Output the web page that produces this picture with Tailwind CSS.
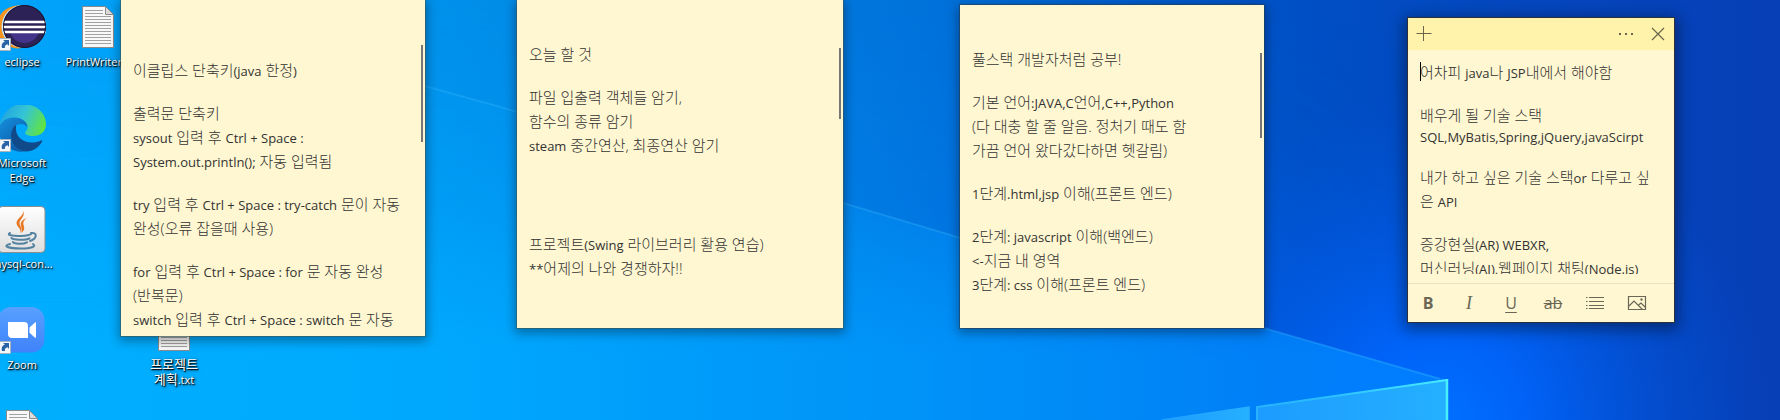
<!DOCTYPE html>
<html lang="ko">
<head>
<meta charset="utf-8">
<title>Desktop</title>
<script src="https://cdn.jsdelivr.net/npm/@tailwindcss/browser@4"></script>
</head>
<body class="relative h-screen overflow-hidden bg-[#0090f0] font-['Open_Sans','Noto_Sans_CJK_KR',sans-serif] text-[#333333]">

<!-- Wallpaper -->
<svg class="absolute inset-0 h-full w-full" viewBox="0 0 1780 420" preserveAspectRatio="none" aria-hidden="true">
  <defs>
    <linearGradient id="sky" x1="0" y1="0" x2="1" y2="0">
      <stop offset="0" stop-color="#00a4fa"/>
      <stop offset=".13" stop-color="#009df5"/>
      <stop offset=".27" stop-color="#008ee9"/>
      <stop offset=".4" stop-color="#007fe0"/>
      <stop offset=".52" stop-color="#0072da"/>
      <stop offset=".6" stop-color="#0064d4"/>
      <stop offset=".73" stop-color="#004fc4"/>
      <stop offset=".86" stop-color="#0546be"/>
      <stop offset="1" stop-color="#063fb6"/>
    </linearGradient>
    <linearGradient id="low" x1="0" y1="0" x2="1" y2="0">
      <stop offset="0" stop-color="#00b0ff"/>
      <stop offset=".3" stop-color="#00acff"/>
      <stop offset=".55" stop-color="#009dfc"/>
      <stop offset=".8" stop-color="#0093ff"/>
      <stop offset="1" stop-color="#0083ff"/>
    </linearGradient>
    <linearGradient id="veil" x1="0" y1="0" x2="1" y2="0">
      <stop offset="0" stop-color="#00b0ff"/>
      <stop offset=".35" stop-color="#00a4ff"/>
      <stop offset=".6" stop-color="#0090ff" stop-opacity=".8"/>
      <stop offset=".8" stop-color="#0078ff" stop-opacity=".4"/>
      <stop offset="1" stop-color="#0060ff" stop-opacity="0"/>
    </linearGradient>
    <linearGradient id="fadeDown" x1="0" y1="0" x2="0" y2="1">
      <stop offset="0" stop-color="#fff" stop-opacity="0"/>
      <stop offset=".5" stop-color="#fff" stop-opacity=".4"/>
      <stop offset=".85" stop-color="#fff"/>
    </linearGradient>
    <mask id="down"><rect width="1780" height="420" fill="url(#fadeDown)"/></mask>
    <radialGradient id="glow" gradientUnits="userSpaceOnUse" cx="1440" cy="420" r="330">
      <stop offset="0" stop-color="#0070ff"/>
      <stop offset=".25" stop-color="#0066ff" stop-opacity=".9"/>
      <stop offset=".6" stop-color="#005ff0" stop-opacity=".45"/>
      <stop offset="1" stop-color="#0055e0" stop-opacity="0"/>
    </radialGradient>
    <linearGradient id="pane" x1="0" y1="0" x2="1" y2="0">
      <stop offset="0" stop-color="#1c9cff"/>
      <stop offset="1" stop-color="#25b0ff"/>
    </linearGradient>
    <linearGradient id="edge" gradientUnits="userSpaceOnUse" x1="1160" y1="0" x2="1447" y2="0">
      <stop offset="0" stop-color="#20a0ff"/>
      <stop offset=".6" stop-color="#2cc0ff"/>
      <stop offset="1" stop-color="#48ecff"/>
    </linearGradient>
  </defs>
  <rect width="1780" height="420" fill="url(#sky)"/>
  <rect width="1440" height="420" fill="url(#veil)" opacity=".65" mask="url(#down)"/>
  <rect x="900" width="880" height="420" fill="url(#glow)"/>
  <path d="M0-34 L425 86 L843 203 L1264 328 L1447 380 V420 H0Z" fill="url(#low)" opacity=".75" mask="url(#down)"/>
  <path d="M300 50 L425 86 L843 203 L1264 328 L1440 379" fill="none" stroke="#3db8ff" stroke-opacity=".3" stroke-width="2"/>
  <path d="M1162 420 L1249 407 V420Z" fill="url(#pane)"/>
  <path d="M1162 420 L1249 407 V420" fill="none" stroke="url(#edge)" stroke-width="1.5"/>
  <path d="M1257 407 L1447 380 V420 H1257Z" fill="url(#pane)"/>
  <path d="M1257 420 V407 L1447 380" fill="none" stroke="url(#edge)" stroke-width="2"/>
  <path d="M1447 379 V420" stroke="#48f0ff" stroke-width="2.5"/>
</svg>

<!-- Desktop icons -->
<main class="relative -ml-4 grid h-screen w-[228px] grid-cols-3 auto-rows-[101px] overflow-hidden pt-1 text-center text-[11px] leading-[15px] text-white [text-shadow:1px_1px_1px_#000,1px_1px_3px_#000]">
  <a href="#eclipse" class="col-start-1 row-start-1 flex flex-col items-center gap-0.5">
    <svg class="size-12" viewBox="0 0 48 48" aria-hidden="true">
      <circle cx="20" cy="23" r="21.500" fill="#f7941e"/>
      <circle cx="25" cy="22.500" r="21.500" fill="#bfe3f7"/>
      <circle cx="26.500" cy="22.500" r="21.500" fill="#2c2255"/>
      <path d="M12 28h29a15 15 0 0 1-29 0z" fill="#43348a"/>
      <path d="M5.500 18h42M4.500 23h43.500M5.500 28h42" stroke="#fff" stroke-width="2.400"/>
      <circle cx="26.500" cy="22.500" r="21" fill="none" stroke="#17122e"/>
      <g><path d="M.5 34.500h12v12H.5z" fill="#f4f7fa" stroke="#a9b4bf"/><path d="M4 44c-1-4 1-6 3-6.500L5 36h6v6l-1.500-1.800C7 41 6.500 42 7 44z" fill="#2a62a8"/></g>
    </svg>
    <span>eclipse</span>
  </a>
  <a href="#printwriter" class="col-start-2 row-start-1 flex flex-col items-center gap-0.5">
    <svg class="size-12" viewBox="0 0 48 48" aria-hidden="true">
      <path d="M8.500 2.500h23l8 8v33h-31z" fill="#f8f8f8" stroke="#8b8b8b"/>
      <path d="M31.500 2.500v8h8z" fill="#dcdcdc" stroke="#8b8b8b"/>
      <path d="M11 6.500h18M11 9.500h18M11 12.500h26M11 15.500h26M11 18.500h26M11 21.500h26M11 24.500h26M11 27.500h26M11 30.500h26M11 33.500h26M11 36.500h26M11 39.500h26" stroke="#a2a2a2"/>
    </svg>
    <span>PrintWriter...</span>
  </a>
  <a href="#edge" class="col-start-1 row-start-2 flex flex-col items-center gap-0.5">
    <svg class="size-12" viewBox="0 0 48 48" aria-hidden="true">
      <defs>
        <linearGradient id="eg" x1="0" y1=".3" x2="1" y2=".6"><stop offset="0" stop-color="#1fa2e0"/><stop offset=".5" stop-color="#35c5d5"/><stop offset="1" stop-color="#62e43e"/></linearGradient>
        <linearGradient id="eb" x1="0" y1="0" x2=".7" y2="1"><stop offset="0" stop-color="#1590dc"/><stop offset="1" stop-color="#0c59a8"/></linearGradient>
      </defs>
      <path d="M1 22C3 9 13-1 25-1c13 0 23 9 23 20 0 8-6 12-13 12-5 0-8-1.500-8-3 0-1.500 2.500-2.500 2.500-6 0-5-6-9.500-13-9.500C9 12.500 4 16 1 22z" fill="url(#eg)"/>
      <path d="M1 22c3-6 8-9.500 15.500-9.500 7 0 13 4.500 13 9.500-2-2-4-3-6.500-3-6 0-10 6-10 12 0 8 6 15 13 15.500C12 48-1 36 1 22z" fill="url(#eb)"/>
      <path d="M18 20c-3 2-5 6-5 11 0 9 7 15.500 15 15.500 7 0 13-4 16-10 .5-1-.3-1.500-1-1-3 1.500-6 2-9 2-9 0-16-6-16-13 0-2 0-3 0-4.500z" fill="#114a8b"/>
      <g><path d="M.5 34.500h12v12H.5z" fill="#f4f7fa" stroke="#a9b4bf"/><path d="M4 44c-1-4 1-6 3-6.500L5 36h6v6l-1.500-1.800C7 41 6.500 42 7 44z" fill="#2a62a8"/></g>
    </svg>
    <span>Microsoft<br>Edge</span>
  </a>
  <a href="#mysql" class="col-start-1 row-start-3 flex flex-col items-center gap-0.5">
    <svg class="size-12" viewBox="0 0 48 48" aria-hidden="true">
      <defs><linearGradient id="jb" x1="0" y1="0" x2="0" y2="1"><stop offset="0" stop-color="#fff"/><stop offset="1" stop-color="#dedede"/></linearGradient></defs>
      <rect x=".5" y=".5" width="46.500" height="46" rx="4" fill="url(#jb)" stroke="#8d8d8d"/>
      <path d="M24.500 4c3 5-6 8-6 13 0 4 5 5 4 10 3-4-1-7-1-10 0-4 7-7 3-13zM29 12c-5 2-7 4-6 8 .8 3 2 4 0 7 4-3 3.500-5 2.500-8-.8-3 .5-5 3.500-7z" fill="#e87722"/>
      <path d="M12 27c-4 2 2 3.200 11 3 5-.2 9-1 10-2M13.500 32c1 2 14 2.500 18 .3M15 36c1 2 10 2.500 14 .3M33 27c6-1 7 5-1 8M12 38c-8 2-2 4.500 11 4.500 10 0 16-2 12-4.500" fill="none" stroke="#5382a1" stroke-width="2" stroke-linecap="round"/>
    </svg>
    <span>mysql-con...</span>
  </a>
  <a href="#zoom" class="col-start-1 row-start-4 flex flex-col items-center gap-0.5">
    <svg class="size-12" viewBox="0 0 48 48" aria-hidden="true">
      <defs><linearGradient id="zb" x1="0" y1="0" x2="0" y2="1"><stop offset="0" stop-color="#58a0ff"/><stop offset="1" stop-color="#3f82fb"/></linearGradient></defs>
      <rect x="0" y="0" width="46.500" height="45.500" rx="13" fill="url(#zb)"/>
      <path d="M10 15h16a4 4 0 0 1 4 4v12H14a4 4 0 0 1-4-4z" fill="#fff"/>
      <path d="M31.500 20.500l5.500-5c.6-.4 1 0 1 .6v14c0 .7-.4 1-1 .6l-5.500-5z" fill="#fff"/>
      <g><path d="M.5 34.500h12v12H.5z" fill="#f4f7fa" stroke="#a9b4bf"/><path d="M4 44c-1-4 1-6 3-6.500L5 36h6v6l-1.500-1.800C7 41 6.500 42 7 44z" fill="#2a62a8"/></g>
    </svg>
    <span>Zoom</span>
  </a>
  <a href="#project" class="col-start-3 row-start-4 flex flex-col items-center gap-0.5">
    <svg class="size-12" viewBox="0 0 48 48" aria-hidden="true">
      <path d="M8.500 2.500h23l8 8v33h-31z" fill="#f8f8f8" stroke="#8b8b8b"/>
      <path d="M11 24.500h26M11 27.500h26M11 30.500h26M11 33.500h26M11 36.500h26M11 39.500h26" stroke="#a2a2a2"/>
    </svg>
    <span class="text-[13px]">프로젝트<br>계획<span class="text-[11px] leading-none">.txt</span></span>
  </a>
  <a href="#document" aria-label="문서" class="col-start-1 row-start-5 flex flex-col items-center">
    <svg class="size-12" viewBox="0 0 48 48" aria-hidden="true">
      <path d="M8.500 2.500h23l8 8v33h-31z" fill="#f8f8f8" stroke="#8b8b8b"/>
      <path d="M31.500 2.500v8h8z" fill="#dcdcdc" stroke="#8b8b8b"/>
      <path d="M11 6.500h18M11 9.500h18M11 12.500h26M11 15.500h26" stroke="#a2a2a2"/>
    </svg>
  </a>
</main>

<!-- Sticky note: Eclipse shortcuts -->
<article class="absolute top-0 left-[121px] w-[304px] overflow-hidden bg-[#fff7d1] px-3 pt-[58px] pb-[5px] text-[15px] leading-6 font-light whitespace-nowrap shadow-[0_0_0_1px_rgba(60,90,90,0.6),0_3px_10px_2px_rgba(0,0,0,0.35)] [&_span]:text-[13px] [&_span]:leading-none [&_span]:font-normal">
  <p>이클립스 단축키<span>(java</span> 한정<span>)</span></p>
  <p class="mt-[19px]">출력문 단축키</p>
  <p><span>sysout</span> 입력 후 <span>Ctrl + Space :</span></p>
  <p><span>System.out.println();</span> 자동 입력됨</p>
  <p class="mt-[19px]"><span>try</span> 입력 후 <span>Ctrl + Space : try-catch</span> 문이 자동</p>
  <p>완성(오류 잡을때 사용)</p>
  <p class="mt-[19px]"><span>for</span> 입력 후 <span>Ctrl + Space : for</span> 문 자동 완성</p>
  <p>(반복문)</p>
  <p><span>switch</span> 입력 후 <span>Ctrl + Space : switch</span> 문 자동</p>
  <div class="absolute top-[45px] right-0.5 h-[97px] w-0.5 bg-[#767676]"></div>
</article>

<!-- Sticky note: today's tasks -->
<article class="absolute top-0 left-[517px] w-[326px] overflow-hidden bg-[#fff7d1] px-3 pt-[42px] pb-12 text-[15px] leading-6 font-light whitespace-nowrap shadow-[0_0_0_1px_rgba(60,90,90,0.6),0_3px_10px_2px_rgba(0,0,0,0.35)] [&_span]:text-[13px] [&_span]:leading-none [&_span]:font-normal">
  <p>오늘 할 것</p>
  <p class="mt-[19px]">파일 입출력 객체들 암기,</p>
  <p>함수의 종류 암기</p>
  <p><span>steam</span> 중간연산, 최종연산 암기</p>
  <p class="mt-[75px]">프로젝트<span>(Swing</span> 라이브러리 활용 연습)</p>
  <p><span>**</span>어제의 나와 경쟁하자!!</p>
  <div class="absolute top-12 right-0.5 h-[71px] w-0.5 bg-[#767676]"></div>
</article>

<!-- Sticky note: study plan -->
<article class="absolute top-[5px] left-[960px] w-[304px] overflow-hidden bg-[#fff7d1] px-3 pt-[42px] pb-8 text-[15px] leading-6 font-light whitespace-nowrap shadow-[0_0_0_1px_rgba(40,60,80,0.6),0_3px_10px_2px_rgba(0,0,0,0.35)] [&_span]:text-[13px] [&_span]:leading-none [&_span]:font-normal">
  <p>풀스택 개발자처럼 공부!</p>
  <p class="mt-[19px]">기본 언어<span>:JAVA,C</span>언어<span>,C++,Python</span></p>
  <p>(다 대충 할 줄 알음. 정처기 때도 함</p>
  <p>가끔 언어 왔다갔다하면 헷갈림)</p>
  <p class="mt-[19px]"><span>1</span>단계<span>.html,jsp</span> 이해(프론트 엔드)</p>
  <p class="mt-[19px]"><span>2</span>단계<span>: javascript</span> 이해(백엔드)</p>
  <p><span>&lt;-</span>지금 내 영역</p>
  <p><span>3</span>단계<span>: css</span> 이해(프론트 엔드)</p>
  <div class="absolute top-12 right-0.5 h-[85px] w-0.5 bg-[#767676]"></div>
</article>

<!-- Sticky note: active, with title bar and format bar -->
<article class="absolute top-[18px] left-[1408px] flex w-[266px] flex-col bg-[#fff7d1] shadow-[0_0_0_1px_#2c3038,0_4px_14px_4px_rgba(0,0,0,0.4)]">
  <header class="flex h-8 items-center bg-[#fff2ab] text-[#6a654a]">
    <button type="button" aria-label="새 메모" class="flex h-8 w-8 items-center justify-center">
      <svg class="size-4" viewBox="0 0 16 16" fill="none" stroke="currentColor" aria-hidden="true"><path d="M.5 7.500h15M7.500 0v15"/></svg>
    </button>
    <button type="button" aria-label="메뉴" class="ml-auto flex h-8 w-8 items-center justify-center">
      <svg class="size-4" viewBox="0 0 16 16" fill="currentColor" aria-hidden="true"><path d="M1 7h2v2H1zM7 7h2v2H7zM13 7h2v2h-2z"/></svg>
    </button>
    <button type="button" aria-label="메모 닫기" class="flex h-8 w-8 items-center justify-center">
      <svg class="size-4" viewBox="0 0 16 16" fill="none" stroke="currentColor" stroke-width="1.200" aria-hidden="true"><path d="M2 2l12 12M14 2L2 14"/></svg>
    </button>
  </header>
  <div contenteditable="true" role="textbox" aria-multiline="true" aria-label="메모 내용" class="mt-[10px] mb-[9px] h-[214px] overflow-hidden px-3 text-[15px] leading-6 font-light whitespace-nowrap outline-none [&_span]:text-[13px] [&_span]:leading-none [&_span]:font-normal">
    <p class="relative before:absolute before:top-0.5 before:left-0 before:h-[19px] before:w-px before:bg-black">어차피 <span>java</span>나 <span>JSP</span>내에서 해야함</p>
    <p class="mt-[19px]">배우게 될 기술 스택</p>
    <p class="leading-[19px]"><span>SQL,MyBatis,Spring,jQuery,javaScirpt</span></p>
    <p class="mt-[19px]">내가 하고 싶은 기술 스택<span>or</span> 다루고 싶</p>
    <p>은 <span>API</span></p>
    <p class="mt-[19px]">증강현실<span>(AR) WEBXR,</span></p>
    <p>머신러닝<span>(AI),</span>웹페이지 채팅<span>(Node.js)</span></p>
  </div>
  <footer class="flex h-[39px] items-center border-t border-[#e8e2c2] text-base text-[#6b6757]">
    <button type="button" aria-label="굵게" class="flex w-10 justify-center font-bold">B</button>
    <button type="button" aria-label="기울임꼴" class="flex w-[42px] justify-center font-['Liberation_Serif',serif] text-lg italic">I</button>
    <button type="button" aria-label="밑줄" class="flex w-[42px] justify-center underline underline-offset-3">U</button>
    <button type="button" aria-label="취소선" class="flex w-[42px] justify-center line-through">ab</button>
    <button type="button" aria-label="글머리 기호" class="flex w-[42px] justify-center">
      <svg class="size-5" viewBox="0 0 20 20" fill="none" stroke="currentColor" aria-hidden="true"><path d="M1 4.500h1.500M4 4.500h15M1 8.500h1.500M4 8.500h15M1 12.500h1.500M4 12.500h15M1 15.500h1.500M4 15.500h15"/></svg>
    </button>
    <button type="button" aria-label="이미지 추가" class="flex w-[42px] justify-center">
      <svg class="size-5" viewBox="0 0 20 20" fill="none" stroke="currentColor" stroke-width="1.200" aria-hidden="true"><path d="M1.500 3.500h17v13h-17zM2 13l5-5 8.500 8.500M11.500 12l2.500-2 4.500 4.500"/><circle cx="14.500" cy="6.500" r=".6" fill="currentColor"/></svg>
    </button>
  </footer>
</article>
</body>
</html>
